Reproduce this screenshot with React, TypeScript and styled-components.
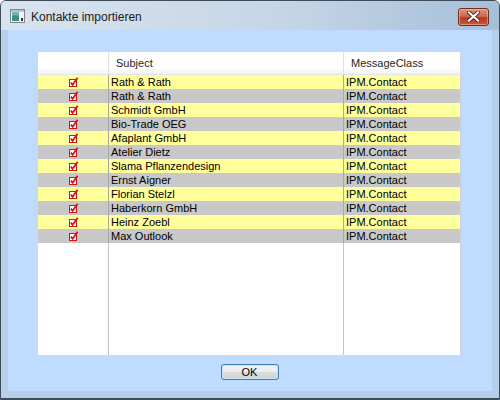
import React from 'react';
import styled, { createGlobalStyle } from 'styled-components';

interface Contact {
	subject: string;
	messageClass: string;
}

const contacts: Contact[] = [
	{ subject: 'Rath & Rath', messageClass: 'IPM.Contact' },
	{ subject: 'Rath & Rath', messageClass: 'IPM.Contact' },
	{ subject: 'Schmidt GmbH', messageClass: 'IPM.Contact' },
	{ subject: 'Bio-Trade OEG', messageClass: 'IPM.Contact' },
	{ subject: 'Afaplant GmbH', messageClass: 'IPM.Contact' },
	{ subject: 'Atelier Dietz', messageClass: 'IPM.Contact' },
	{ subject: 'Slama Pflanzendesign', messageClass: 'IPM.Contact' },
	{ subject: 'Ernst Aigner', messageClass: 'IPM.Contact' },
	{ subject: 'Florian Stelzl', messageClass: 'IPM.Contact' },
	{ subject: 'Haberkorn GmbH', messageClass: 'IPM.Contact' },
	{ subject: 'Heinz Zoebl', messageClass: 'IPM.Contact' },
	{ subject: 'Max Outlook', messageClass: 'IPM.Contact' },
];

const GlobalStyle = createGlobalStyle`
	html, body {
		margin: 0;
		padding: 0;
		background: #fff;
	}
	* {
		box-sizing: border-box;
	}
`;

const Window = styled.div`
	width: 500px;
	height: 400px;
	display: flex;
	flex-direction: column;
	border: 1px solid #3f4b58;
	border-radius: 6px 6px 0 0;
	background: linear-gradient( to right, #d3dfeb, #b4cbe2 );
	font-family: 'Liberation Sans', Arial, sans-serif;
	overflow: hidden;
`;

const TitleBar = styled.div`
	height: 29px;
	flex-shrink: 0;
	display: flex;
	align-items: center;
	padding: 0 10px 0 9px;
	gap: 6px;
	background: linear-gradient( to right, #d8e3ee 0%, #c6d6e7 55%, #a6bfd9 100% );
`;

const Title = styled.span`
	flex: 1;
	font-size: 12px;
	color: #1b1b1b;
	padding-top: 3px;
`;

const CloseButton = styled.button`
	width: 31px;
	height: 18px;
	margin-top: 2px;
	padding: 0;
	border: 1px solid #6e2e22;
	border-radius: 3px;
	background: linear-gradient( #e0917f 0%, #cf6a52 45%, #b63b22 55%, #c9583c 100% );
	box-shadow: inset 0 0 0 1px rgba( 255, 210, 200, 0.45 );
	display: flex;
	align-items: center;
	justify-content: center;
	cursor: default;
`;

const Frame = styled.div`
	flex: 1;
	display: flex;
	padding: 0 7px 7px 7px;
	background: #b6cfea;
	border-bottom: 1px solid #3f4b58;
`;

const Client = styled.div`
	flex: 1;
	display: flex;
	flex-direction: column;
	align-items: center;
	padding: 22px 31px 11px 30px;
	background: #bfdbff;
`;

const Table = styled.div`
	width: 100%;
	height: 303px;
	display: flex;
	flex-direction: column;
	background: #fff;
`;

const Row = styled.div`
	display: grid;
	grid-template-columns: 71px 235px 1fr;
	height: 14px;
`;

const HeaderRow = styled( Row )`
	height: 23px;
	background: linear-gradient( #ffffff 0%, #ffffff 70%, #f1f2f4 100% );
	border-bottom: 1px solid #e3e4e6;
`;

const FillerRow = styled( Row )`
	flex: 1;
	height: auto;
`;

const HeaderCell = styled.div`
	font-size: 11px;
	color: #1e1e1e;
	padding: 5px 0 0 7px;
	border-right: 1px solid #e0e0e0;
	&:last-child {
		border-right: 1px solid #d6d6d6;
	}
`;

const Cell = styled.div< { $tone: 'yellow' | 'gray' | 'none' } >`
	font-size: 11px;
	line-height: 14px;
	color: #000;
	padding-left: 2px;
	white-space: nowrap;
	overflow: hidden;
	background: ${ ( p ) =>
		p.$tone === 'yellow' ? '#ffff9c' : p.$tone === 'gray' ? '#c8c8c8' : 'transparent' };
	border-right: 1px solid ${ ( p ) => ( p.$tone === 'none' ? '#c4c4c4' : '#a8a8a8' ) };
	&:last-child {
		border-right: 1px solid #d0d0d0;
	}
`;

const CheckCell = styled( Cell )`
	display: flex;
	align-items: center;
	justify-content: center;
	padding-left: 0;
`;

const Footer = styled.div`
	flex: 1;
	display: flex;
	align-items: flex-end;
	justify-content: center;
`;

const OkButton = styled.button`
	width: 58px;
	height: 16px;
	padding: 0;
	border: 1px solid #3c7fb1;
	border-radius: 3px;
	background: linear-gradient( #f4f4f4 0%, #ececec 50%, #dcdcdc 51%, #d2d2d2 100% );
	box-shadow: inset 0 0 0 1px #c8e6f8;
	font-family: 'Liberation Sans', Arial, sans-serif;
	font-size: 11px;
	line-height: 12px;
	color: #000;
	cursor: default;
`;

function AppIcon() {
	return (
		<svg width="15" height="14" viewBox="0 0 15 14">
			<rect x="0.5" y="0.5" width="14" height="13" fill="#f4f6f8" stroke="#7a8590" />
			<rect x="1" y="1" width="13" height="2" fill="#b9c4cf" />
			<rect x="2" y="3.5" width="7" height="8.5" fill="#3d8c86" />
			<rect x="2" y="3.5" width="7" height="3" fill="#6fb2a9" />
			<rect x="11" y="9" width="2" height="3" fill="#333" />
		</svg>
	);
}

function CloseIcon() {
	return (
		<svg width="13" height="11" viewBox="0 0 13 11">
			<path d="M2 1.5 L11 9.5 M11 1.5 L2 9.5" stroke="#5a2218" strokeWidth="4" strokeLinecap="square" />
			<path d="M2 1.5 L11 9.5 M11 1.5 L2 9.5" stroke="#ffffff" strokeWidth="2.2" strokeLinecap="square" />
		</svg>
	);
}

function CheckMark() {
	return (
		<svg width="11" height="11" viewBox="0 0 11 11">
			<rect x="1.5" y="2.5" width="7" height="7" fill="#fff" stroke="#e01010" strokeWidth="1" />
			<path d="M2.8 5.6 L4.6 7.8 L9.6 0.8" fill="none" stroke="#e01010" strokeWidth="1.8" />
		</svg>
	);
}

export default function App() {
	return (
		<>
			<GlobalStyle />
			<Window>
				<TitleBar>
					<AppIcon />
					<Title>Kontakte importieren</Title>
					<CloseButton aria-label="Schließen">
						<CloseIcon />
					</CloseButton>
				</TitleBar>
				<Frame>
					<Client>
						<Table>
							<HeaderRow>
								<HeaderCell />
								<HeaderCell>Subject</HeaderCell>
								<HeaderCell>MessageClass</HeaderCell>
							</HeaderRow>
							{ contacts.map( ( c, i ) => {
								const tone = i % 2 === 0 ? 'yellow' : 'gray';
								return (
									<Row key={ i }>
										<CheckCell $tone={ tone }>
											<CheckMark />
										</CheckCell>
										<Cell $tone={ tone }>{ c.subject }</Cell>
										<Cell $tone={ tone }>{ c.messageClass }</Cell>
									</Row>
								);
							} ) }
							<FillerRow>
								<Cell $tone="none" />
								<Cell $tone="none" />
								<Cell $tone="none" />
							</FillerRow>
						</Table>
						<Footer>
							<OkButton>OK</OkButton>
						</Footer>
					</Client>
				</Frame>
			</Window>
		</>
	);
}
